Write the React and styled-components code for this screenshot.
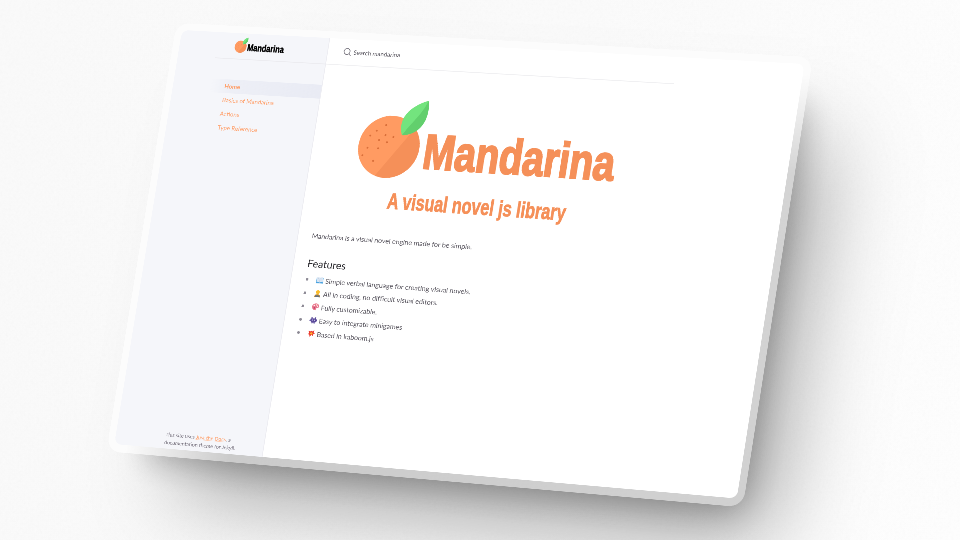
import React from "react";
import styled, { createGlobalStyle, css } from "styled-components";

const GlobalStyle = createGlobalStyle`
  body { margin: 0; }
  * { box-sizing: border-box; }
`;

const Scene = styled.main`
  position: relative;
  width: 960px;
  height: 540px;
  overflow: hidden;
  background: linear-gradient(100deg, #fafafa, #fbfbfb 55%, #fefefe);
  font-family: Lato, "Liberation Sans", sans-serif;
`;

const Grain = styled.svg`
  position: absolute;
  inset: 0;
  width: 100%;
  height: 100%;
  opacity: 0.04;
`;

const Stage = styled.div`
  position: relative;
  display: flow-root;
  width: 1434px;
  height: 963px;
  transform-origin: 0 0;
  transform: matrix3d(
    0.40799, 0.021618, 0, -0.000032462,
    -0.0709, 0.42762, 0, -0.00000519,
    0, 0, 1, 0,
    182, 30, 0, 1
  );
`;

const Slab = styled.div`
  width: 1466px;
  height: 997px;
  margin: -16px;
  padding: 16px 16px 18px;
  border-radius: 32px;
  background:
    linear-gradient(to right, #fcfcfc 3%, #cbcbcb 20%, #d1d1d1) bottom / 100% 40px no-repeat,
    linear-gradient(to bottom, #fcfcfc 4%, #d4d4d4 26%, #d1d1d1) right / 40px 100% no-repeat,
    #fcfcfc;
  box-shadow:
    50px 60px 70px -50px rgba(0, 0, 0, 0.28),
    120px 130px 190px -60px rgba(0, 0, 0, 0.36);
`;

const Site = styled.div`
  display: flex;
  height: 963px;
  overflow: hidden;
  border-radius: 16px;
  background: #fff;
`;

const Sidebar = styled.aside`
  display: flex;
  flex: 0 0 354px;
  flex-direction: column;
  padding-left: 90px;
  border-right: 2px solid #ededf2;
  background: #f5f6fa;
`;

const SiteHeader = styled.header`
  height: 61px;
  padding: 9px 0 0 42px;
  border-bottom: 2px solid #ececf0;
`;

const Nav = styled.nav`
  display: flex;
  flex-direction: column;
  padding-top: 47px;
`;

const NavItem = styled.a`
  height: 32px;
  padding-left: 33px;
  color: #ffa06b;
  font-size: 14px;
  line-height: 32px;
  ${(p) =>
    p.$active &&
    css`
      font-weight: 700;
      background: linear-gradient(-90deg, #e9ebf4, rgba(235, 237, 245, 0.8) 80%, transparent);
    `}
`;

const SiteFooter = styled.footer`
  margin-top: auto;
  padding: 0 40px 5px 28px;
  color: #77727e;
  font-size: 12px;
  line-height: 18px;
  white-space: nowrap;
`;

const FooterLink = styled.a`
  color: #ff9a62;
  text-decoration: underline;
  text-decoration-color: #ffc9aa;
`;

const Main = styled.div`
  width: 800px;
`;

const SearchBar = styled.div`
  display: flex;
  align-items: center;
  gap: 5px;
  height: 61px;
  padding-left: 36px;
  border-bottom: 2px solid #f0f0f2;
  color: #5c5962;
  font-size: 14px;
`;

const Content = styled.article`
  padding: 49px 32px;
  color: #5c5962;
  font-size: 16px;
  letter-spacing: -0.13px;
`;

const Hero = styled.svg`
  display: block;
  width: 620px;
  height: 300px;
  margin-left: 54px;
  overflow: visible;
  letter-spacing: 0;
`;

const SmallLogo = styled.svg`
  display: block;
  width: 125px;
  height: 44px;
  overflow: visible;
`;

const Lead = styled.p`
  margin: 31px 0 0;
  line-height: 24px;
`;

const SectionTitle = styled.h2`
  margin: 36px 0 0;
  color: #27262b;
  font-size: 24px;
  font-weight: 400;
  line-height: 30px;
  letter-spacing: 0;
`;

const FeatureList = styled.ul`
  margin: 7px 0 0;
  padding: 0;
  list-style: none;
`;

const Feature = styled.li`
  display: flex;
  align-items: center;
  height: 30.5px;
  letter-spacing: -0.06px;
  white-space: nowrap;
`;

const Bullet = styled.span`
  width: 6px;
  height: 6px;
  margin: 0 18px 0 2px;
  border-radius: 50%;
  background: #8d8a95;
`;

const Emoji = styled.svg`
  width: 18px;
  height: 18px;
  margin-right: 4px;
`;

const specks = [
  [517, 191], [497, 205], [484, 217], [519, 214], [506, 226], [538, 217],
  [525, 230], [482, 245], [507, 245], [473, 263], [500, 274],
];

function Fruit() {
  return (
    <g>
      <circle cx="531" cy="240" r="71" fill="#ff9b62" />
      <path d="M509 307.5 L585 194 A71 71 0 0 1 509 307.5Z" fill="#f59059" />
      {specks.map(([x, y]) => (
        <circle key={`${x}-${y}`} cx={x} cy={y} r="2.3" fill="#d96f3a" />
      ))}
      <path d="M557 212 C541 177 562 146 606 130 C615 160 606 208 557 212Z" fill="#73e47e" />
      <path d="M557 212 C575 180 595 164 606 130 C615 160 606 208 557 212Z" fill="#62cf6d" />
    </g>
  );
}

function Wordmark({ fill }) {
  return (
    <text
      x="613" y="284" fill={fill} stroke={fill} strokeWidth="4"
      fontFamily="Liberation Sans, Arial, sans-serif" fontWeight="700" fontSize="111"
      textLength="438" lengthAdjust="spacingAndGlyphs"
    >
      Mandarina
    </text>
  );
}

function BookIcon() {
  return (
    <Emoji viewBox="0 0 20 20">
      <path d="M1 4 H19 V18 H1Z" fill="#4aa3e0" />
      <path d="M2 3 Q6 1 10 4 Q14 1 18 3 V15 Q14 13 10 16 Q6 13 2 15Z" fill="#dce8f6" />
      <path d="M10 4V16M4 6L8 7M4 9L8 10M12 7L16 6M12 10L16 9" stroke="#b4c4d6" fill="none" />
    </Emoji>
  );
}

function CoderIcon() {
  return (
    <Emoji viewBox="0 0 20 20">
      <circle cx="10" cy="6" r="5" fill="#fbbd2b" />
      <path d="M2 19 Q2 11 10 11 Q18 11 18 19Z" fill="#d99a2e" />
      <path d="M5 14H15L17 19H3Z" fill="#68717d" />
    </Emoji>
  );
}

function PaletteIcon() {
  return (
    <Emoji viewBox="0 0 20 20">
      <path d="M10 1.5 C4 1.5 1 6 1 10 C1 15 5 18.5 10 18.5 C13 18.5 11 15 13 13 C15 11 19 13 19 9 C19 4 15 1.5 10 1.5Z" fill="#e8788e" />
      <circle cx="6" cy="7" r="1.6" fill="#fff" />
      <circle cx="12" cy="5" r="2" fill="#ffd4ca" />
      <circle cx="7" cy="13" r="2" fill="#b73561" />
      <circle cx="15" cy="8" r="1.6" fill="#fff" />
    </Emoji>
  );
}

function InvaderIcon() {
  return (
    <Emoji viewBox="0 0 20 20">
      <path d="M4 2H7V5H13V2H16V6H18V9H20V12H17V14H16V15H14V18H11V15H9V18H6V15H4V12H0V9H2V6H4Z" fill="#5b4b9a" />
      <path d="M6 8H8V11H6ZM12 8H14V11H12Z" fill="#cfc8ee" />
    </Emoji>
  );
}

function BoomIcon() {
  return (
    <Emoji viewBox="0 0 20 20">
      <path d="M9 3 12 5 17 1 16 7 19 10 15 12 15 16 11 14 6 19 6 14 2 12 4 9 2 3 7 5Z" fill="#ea3b30" />
      <path d="M10 6 11 8 14 9 12 11 11 14 9 12 6 12 7 9Z" fill="#ffb52e" />
    </Emoji>
  );
}

const features = [
  [BookIcon, "Simple verbal language for creating visual novels."],
  [CoderIcon, "All in coding, no difficult visual editors."],
  [PaletteIcon, "Fully customizable."],
  [InvaderIcon, "Easy to integrate minigames"],
  [BoomIcon, "Based in kaboom.js"],
];

export default function App() {
  return (
    <Scene>
      <GlobalStyle />
      <Grain>
        <filter id="grain">
          <feTurbulence type="fractalNoise" baseFrequency="0.35" numOctaves="3" />
          <feColorMatrix type="saturate" values="0" />
        </filter>
        <rect width="100%" height="100%" filter="url(#grain)" />
      </Grain>
      <Stage>
        <Slab>
          <Site>
            <Sidebar>
              <SiteHeader>
                <SmallLogo viewBox="460 129 628 221">
                  <Fruit />
                  <Wordmark fill="#000" />
                </SmallLogo>
              </SiteHeader>
              <Nav>
                <NavItem $active>Home</NavItem>
                <NavItem>Basics of Mandarina</NavItem>
                <NavItem>Actions</NavItem>
                <NavItem>Type Reference</NavItem>
              </Nav>
              <SiteFooter>
                This site uses <FooterLink>Just the Docs</FooterLink>, a
                <br />
                documentation theme for Jekyll.
              </SiteFooter>
            </Sidebar>
            <Main>
              <SearchBar>
                <svg width="19" height="19" viewBox="0 0 19 19" fill="none" stroke="#77747e" strokeWidth="1.7">
                  <circle cx="8.5" cy="8.5" r="7" />
                  <path d="M13.5 13.5 L18 18" />
                </svg>
                Search mandarina
              </SearchBar>
              <Content>
                <Hero viewBox="440 110 620 300">
                  <Fruit />
                  <Wordmark fill="#f59059" />
                  <text
                    x="548" y="380" fill="#f59059" stroke="#f59059" strokeWidth="1.5"
                    fontFamily="Liberation Sans, Arial, sans-serif" fontWeight="700" fontSize="50"
                    textLength="410" lengthAdjust="spacingAndGlyphs"
                  >
                    A visual novel js library
                  </text>
                </Hero>
                <Lead>Mandarina is a visual novel engine made for be simple.</Lead>
                <SectionTitle>Features</SectionTitle>
                <FeatureList>
                  {features.map(([Icon, label]) => (
                    <Feature key={label}>
                      <Bullet />
                      <Icon />
                      {label}
                    </Feature>
                  ))}
                </FeatureList>
              </Content>
            </Main>
          </Site>
        </Slab>
      </Stage>
    </Scene>
  );
}
